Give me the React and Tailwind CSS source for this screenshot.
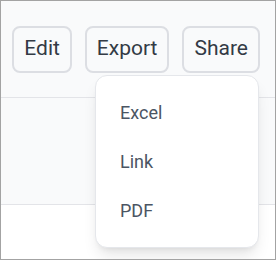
import { useState } from "react";

export default function App() {
  const [open] = useState(true);
  const items = ["Excel", "Link", "PDF"];

  return (
    <div
      className="w-[276px] h-[260px] border border-[#a3a3a3] bg-white flex flex-col relative overflow-hidden"
      style={{ fontFamily: "Roboto, 'Liberation Sans', sans-serif" }}
    >
      {/* toolbar */}
      <div className="h-[97px] shrink-0 bg-[#f9fafb] border-b border-[#e3e4e8] flex items-center justify-end gap-[13px] pr-[15px]">
        <button className="h-[47px] px-[10px] rounded-lg border-2 border-[#dcdee3] bg-[#f9fafb] text-[21px] text-[#333a45]">
          Edit
        </button>
        <button className="h-[47px] px-[10px] rounded-lg border-2 border-[#dcdee3] bg-[#f9fafb] text-[21px] text-[#333a45]">
          Export
        </button>
        <button className="h-[47px] px-[10px] rounded-lg border-2 border-[#dcdee3] bg-[#f9fafb] text-[21px] text-[#333a45]">
          Share
        </button>
      </div>

      {/* content */}
      <div className="h-[107px] shrink-0 bg-[#f9fafb] border-b border-[#e3e4e8]" />
      <div className="flex-1 bg-white" />

      {/* share menu */}
      {open && (
        <div className="absolute top-[74px] right-[16px] w-[164px] py-3 rounded-xl border border-[#e5e7eb] bg-white shadow-lg">
          {items.map((item) => (
            <div
              key={item}
              className="px-6 py-[10.5px] text-lg leading-7 text-[#4b5563]"
            >
              {item}
            </div>
          ))}
        </div>
      )}
    </div>
  );
}
